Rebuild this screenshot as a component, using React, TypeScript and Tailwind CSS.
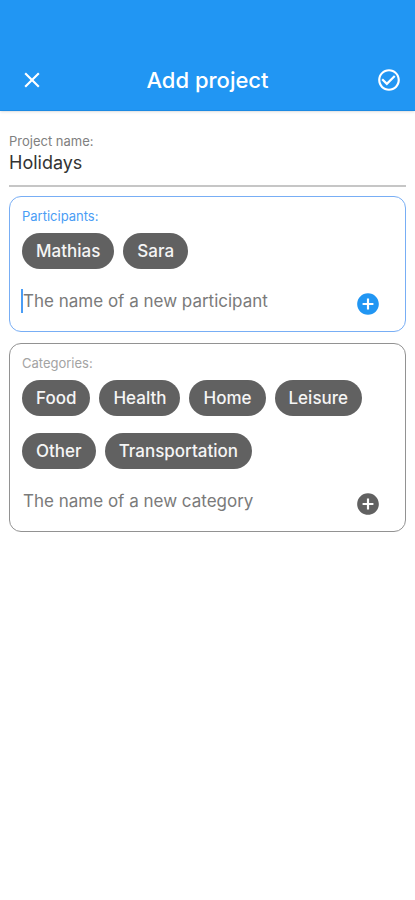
import { useState } from "react";
import { MdAddCircle, MdCheckCircleOutline, MdClose } from "react-icons/md";

interface ChipFieldProps {
  id: string;
  label: string;
  placeholder: string;
  items: string[];
  active?: boolean;
}

const ChipField = ({ id, label, placeholder, items, active = false }: ChipFieldProps) => {
  const [chips, setChips] = useState(items);
  const [value, setValue] = useState("");

  const add = () => {
    if (!value.trim()) return;
    setChips([...chips, value.trim()]);
    setValue("");
  };

  return (
    <section className={`rounded-xl border pt-[11px] pr-3 pl-[11px] ${active ? "border-[#78aef5]" : "border-[#929292]"}`}>
      <label htmlFor={id} className={`block pl-px text-[13px] leading-4 ${active ? "text-[#4a9df5]" : "text-[#a3a3a3]"}`}>
        {label}
      </label>
      <ul className="mt-[9px] flex flex-wrap gap-x-[9px] gap-y-[17px] pl-px">
        {chips.map((chip) => (
          <li key={chip} className="h-9 rounded-full bg-[#616161] px-[14px] text-[17px] leading-9 font-medium text-[#f5f5f5]">
            {chip}
          </li>
        ))}
      </ul>
      <div className="flex h-[62px] items-start pt-5 pr-3">
        <input
          id={id}
          value={value}
          onChange={(e) => setValue(e.target.value)}
          placeholder={placeholder}
          className={`h-6 min-w-0 flex-1 border-l-2 text-[17px] leading-6 text-[#333333] outline-none placeholder:text-[#7a7a7a] ${
            active ? "border-[#4a9df5]" : "border-transparent"
          }`}
        />
        <button type="button" aria-label={`Add to ${label}`} onClick={add} className="mt-0.5">
          <MdAddCircle size={26} className={active ? "text-[#2196f3]" : "text-[#616161]"} />
        </button>
      </div>
    </section>
  );
};

const App = () => {
  return (
    <div className="min-h-screen bg-white font-[Inter,sans-serif]">
      <header className="grid grid-cols-[1fr_auto_1fr] items-center border-b border-[#1c8ae3] bg-[#2196f3] px-[13px] pt-[66px] pb-4 text-white shadow">
        <button type="button" aria-label="Close" className="justify-self-start pl-1.5">
          <MdClose size={26} />
        </button>
        <h1 className="text-[22px] leading-7 font-medium">Add project</h1>
        <button type="button" aria-label="Save" className="justify-self-end">
          <MdCheckCircleOutline size={26} />
        </button>
      </header>

      <main className="px-[9px] pt-[22px]">
        <div className="border-b-2 border-[#c6c6c6] pb-[10px]">
          <label htmlFor="project-name" className="block text-[13px] leading-4 text-[#808080]">
            Project name:
          </label>
          <input
            id="project-name"
            defaultValue="Holidays"
            className="block h-[26px] w-full text-lg leading-6 text-[#333333] outline-none"
          />
        </div>

        <div className="mt-[9px] flex flex-col gap-[11px]">
          <ChipField
            id="participant"
            label="Participants:"
            placeholder="The name of a new participant"
            items={["Mathias", "Sara"]}
            active
          />
          <ChipField
            id="category"
            label="Categories:"
            placeholder="The name of a new category"
            items={["Food", "Health", "Home", "Leisure", "Other", "Transportation"]}
          />
        </div>
      </main>
    </div>
  );
};

export default App;
